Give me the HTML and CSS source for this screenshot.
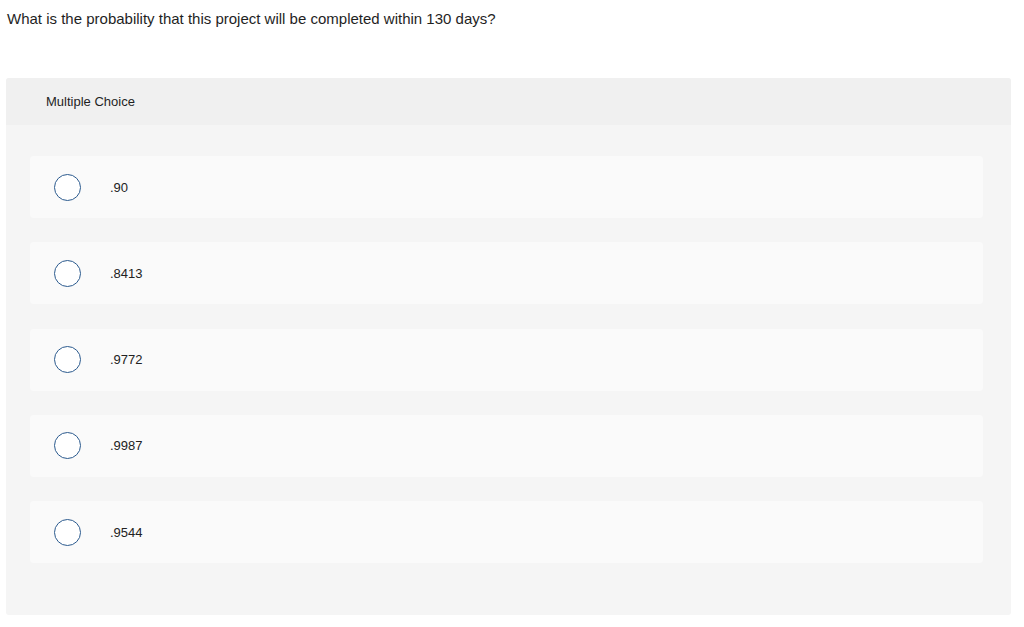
FILE: index.html
```html
<!DOCTYPE html>
<html>
<head>
<meta charset="utf-8">
<link rel="stylesheet" href="styles.css">
</head>
<body>
<p class="question">What is the probability that this project will be completed within 130 days?</p>
<div class="panel">
  <div class="panel-head">Multiple Choice</div>
  <div class="options">
    <label class="option"><span class="radio"></span><span class="label">.90</span></label>
    <label class="option"><span class="radio"></span><span class="label">.8413</span></label>
    <label class="option"><span class="radio"></span><span class="label">.9772</span></label>
    <label class="option"><span class="radio"></span><span class="label">.9987</span></label>
    <label class="option"><span class="radio"></span><span class="label">.9544</span></label>
  </div>
</div>
</body>
</html>
```
FILE: styles.css
```css
html, body {
  margin: 0;
  padding: 0;
  background: #ffffff;
  font-family: "Liberation Sans", Arial, sans-serif;
  color: #222222;
}
.question {
  margin: 0;
  padding: 8px 0 0 7px;
  font-size: 15px;
  line-height: 22px;
  color: #1f1f1f;
}
.panel {
  margin: 48px 13px 0 6px;
  background: #f5f5f5;
  border-radius: 3px;
  overflow: hidden;
}
.panel-head {
  height: 47px;
  display: flex;
  align-items: center;
  padding-left: 40px;
  background: #f0f0f0;
  font-size: 13px;
  color: #1f1f1f;
}
.options {
  display: flex;
  flex-direction: column;
  gap: 24.25px;
  padding: 31px 28px 52px 24px;
}
.option {
  height: 62px;
  flex: none;
  display: flex;
  align-items: center;
  gap: 29px;
  padding-left: 24px;
  background: #fafafa;
  border-radius: 4px;
}
.radio {
  width: 25px;
  height: 25px;
  border: 1px solid #2b5a8e;
  border-radius: 50%;
  background: #ffffff;
  flex: none;
}
.label {
  font-size: 13px;
  color: #222222;
}
```
